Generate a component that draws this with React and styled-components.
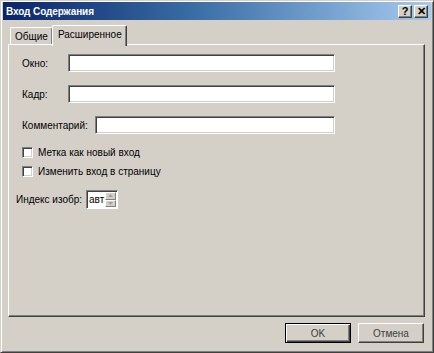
import React from 'react'
import styled, { createGlobalStyle } from 'styled-components'

const face = '#d4d0c8'

const GlobalStyle = createGlobalStyle`
  html, body { margin: 0; padding: 0; background: ${face}; }
  body { font-family: "Liberation Sans", Arial, sans-serif; font-size: 10px; color: #000; }
`

const Window = styled.div`
  box-sizing: border-box;
  width: 434px;
  height: 353px;
  display: flex;
  flex-direction: column;
  background: ${face};
  border-top: 1px solid ${face};
  border-left: 1px solid ${face};
  border-right: 1px solid #404040;
  border-bottom: 1px solid #404040;
  box-shadow: inset 1px 1px #fff, inset -1px -1px #808080;
  padding: 1px 2px 2px 2px;
`

const TitleBar = styled.div`
  height: 18px;
  display: flex;
  align-items: center;
  justify-content: space-between;
  padding: 0 3px 0 3px;
  background: linear-gradient(to right, #0a246a 0%, #3a6ea5 45%, #a6caf0 100%);
`

const TitleText = styled.div`
  color: #fff;
  font-weight: bold;
  font-size: 10px;
  letter-spacing: -0.1px;
`

const TitleButtons = styled.div`
  display: flex;
  gap: 2px;
`

const CapButton = styled.div`
  box-sizing: border-box;
  width: 14px;
  height: 13px;
  background: ${face};
  border-top: 1px solid #fff;
  border-left: 1px solid #fff;
  border-right: 1px solid #404040;
  border-bottom: 1px solid #404040;
  box-shadow: inset -1px -1px #808080;
  display: flex;
  align-items: center;
  justify-content: center;
  font-weight: bold;
  font-size: 11px;
  line-height: 1;
  color: #000;
`

const Body = styled.div`
  flex: 1;
  display: flex;
  flex-direction: column;
  padding: 5px 6px 0 5px;
`

const TabRow = styled.div`
  display: flex;
  align-items: flex-end;
  height: 19px;
  padding-left: 2px;
  position: relative;
  z-index: 1;
`

const Tab = styled.div`
  box-sizing: border-box;
  height: ${p => (p.$active ? '21px' : '17px')};
  margin-bottom: ${p => (p.$active ? '-2px' : '0')};
  padding: ${p => (p.$active ? '3px 4px 0 5px' : '3px 4px 0 4px')};
  margin-left: ${p => (p.$active ? '-1px' : '0')};
  background: ${face};
  border-top: 1px solid #fff;
  border-left: 1px solid #fff;
  border-right: 1px solid #404040;
  box-shadow: inset -1px 0 #808080;
  border-radius: 2px 2px 0 0;
  white-space: nowrap;
`

const Panel = styled.div`
  box-sizing: border-box;
  height: 273px;
  border-top: 1px solid #fff;
  border-left: 1px solid #fff;
  border-right: 1px solid #404040;
  border-bottom: 1px solid #404040;
  box-shadow: inset -1px -1px #808080;
  padding: 9px 0 0 13px;
  display: flex;
  flex-direction: column;
`

const FieldRow = styled.div`
  display: flex;
  align-items: center;
  height: 18px;
  margin-bottom: 13px;
`

const Label = styled.div`
  width: ${p => p.$w}px;
  flex: none;
  white-space: nowrap;
`

const TextInput = styled.div`
  box-sizing: border-box;
  width: ${p => p.$w}px;
  height: 18px;
  background: #fff;
  border-top: 1px solid #808080;
  border-left: 1px solid #808080;
  border-right: 1px solid #fff;
  border-bottom: 1px solid #fff;
  box-shadow: inset 1px 1px #404040, inset -1px -1px ${face};
`

const CheckRow = styled.label`
  display: flex;
  align-items: center;
  height: 13px;
  margin-bottom: 6px;
  gap: 5px;
  &:first-of-type { margin-top: -1px; }
`

const Box = styled.span`
  box-sizing: border-box;
  width: 11px;
  height: 11px;
  background: #fff;
  border-top: 1px solid #808080;
  border-left: 1px solid #808080;
  border-right: 1px solid #fff;
  border-bottom: 1px solid #fff;
  box-shadow: inset 1px 1px #404040, inset -1px -1px ${face};
`

const SpinRow = styled.div`
  display: flex;
  align-items: center;
  margin-top: 6px;
  margin-left: -6px;
  gap: 2px;
`

const Spin = styled.div`
  box-sizing: border-box;
  display: flex;
  width: 32px;
  height: 19px;
  background: #fff;
  border-top: 1px solid #808080;
  border-left: 1px solid #808080;
  border-right: 1px solid #fff;
  border-bottom: 1px solid #fff;
  box-shadow: inset 1px 1px #404040;
  padding: 1px 1px 1px 2px;
`

const SpinText = styled.div`
  flex: 1;
  display: flex;
  align-items: center;
  font-size: 10px;
`

const SpinButtons = styled.div`
  width: 11px;
  display: flex;
  flex-direction: column;
`

const SpinBtn = styled.div`
  box-sizing: border-box;
  flex: 1;
  background: ${face};
  border-top: 1px solid #fff;
  border-left: 1px solid #fff;
  border-right: 1px solid #808080;
  border-bottom: 1px solid #808080;
  display: flex;
  align-items: center;
  justify-content: center;
`

const Footer = styled.div`
  display: flex;
  justify-content: flex-end;
  gap: 7px;
  padding: 6px 1px 0 0;
`

const Button = styled.div`
  box-sizing: border-box;
  width: 66px;
  height: 20px;
  display: flex;
  align-items: center;
  justify-content: center;
  background: ${face};
  border-top: 1px solid ${p => (p.$default ? '#000' : '#fff')};
  border-left: 1px solid ${p => (p.$default ? '#000' : '#fff')};
  border-right: 1px solid ${p => (p.$default ? '#000' : '#404040')};
  border-bottom: 1px solid ${p => (p.$default ? '#000' : '#404040')};
  box-shadow: ${p => (p.$default
    ? 'inset 1px 1px #fff, inset -1px -1px #404040, inset -2px -2px #808080'
    : 'inset -1px -1px #808080')};
  color: #404040;
`

const Arrow = ({ up }) => (
  <svg width="5" height="3" viewBox="0 0 5 3">
    <path d={up ? 'M0 3 L2.5 0 L5 3 Z' : 'M0 0 L2.5 3 L5 0 Z'} fill="#a0a0a0" />
  </svg>
)

export default function App() {
  return (
    <>
      <GlobalStyle />
      <Window>
        <TitleBar>
          <TitleText>Вход Содержания</TitleText>
          <TitleButtons>
            <CapButton>?</CapButton>
            <CapButton>✕</CapButton>
          </TitleButtons>
        </TitleBar>
        <Body>
          <TabRow>
            <Tab>Общие</Tab>
            <Tab $active>Расширенное</Tab>
          </TabRow>
          <Panel>
            <FieldRow>
              <Label $w={46}>Окно:</Label>
              <TextInput $w={267} />
            </FieldRow>
            <FieldRow>
              <Label $w={46}>Кадр:</Label>
              <TextInput $w={267} />
            </FieldRow>
            <FieldRow>
              <Label $w={73}>Комментарий:</Label>
              <TextInput $w={240} />
            </FieldRow>
            <CheckRow>
              <Box />
              Метка как новый вход
            </CheckRow>
            <CheckRow>
              <Box />
              Изменить вход в страницу
            </CheckRow>
            <SpinRow>
              <Label $w={68}>Индекс изобр:</Label>
              <Spin>
                <SpinText>авт</SpinText>
                <SpinButtons>
                  <SpinBtn><Arrow up /></SpinBtn>
                  <SpinBtn><Arrow /></SpinBtn>
                </SpinButtons>
              </Spin>
            </SpinRow>
          </Panel>
          <Footer>
            <Button $default>OK</Button>
            <Button>Отмена</Button>
          </Footer>
        </Body>
      </Window>
    </>
  )
}
